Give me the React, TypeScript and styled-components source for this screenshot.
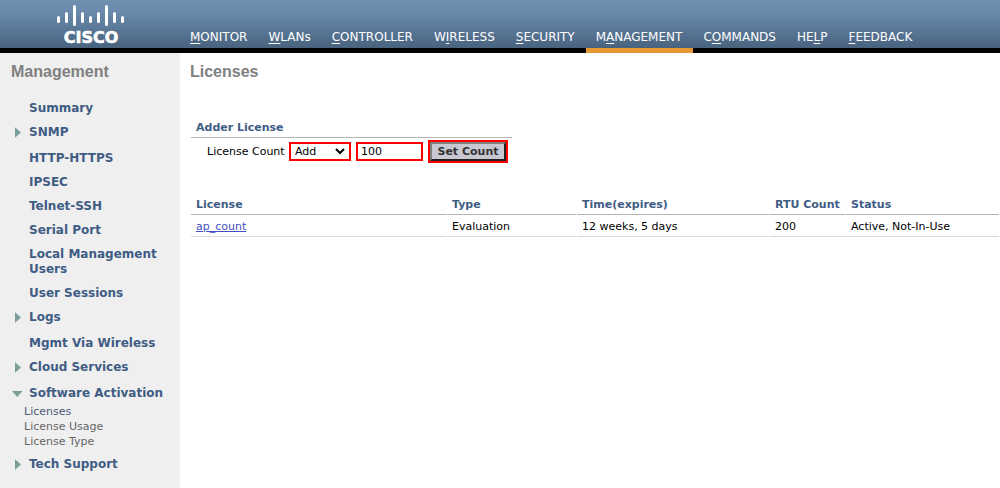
import React from "react";
import styled, { createGlobalStyle, css } from "styled-components";

const GlobalStyle = createGlobalStyle`
  *, *::before, *::after { box-sizing: border-box; }
  body {
    margin: 0;
    background: #fff;
    color: #000;
    font: 11px/15px Verdana, "DejaVu Sans", sans-serif;
  }
`;

const Page = styled.div`
  display: flex;
  flex-direction: column;
  min-height: 100vh;
`;

const Header = styled.header`
  display: flex;
  align-items: flex-end;
  background: #000 linear-gradient(#6f91b2 0, #6888a9 14px, #49637f 48px) no-repeat 0 0 / 100% 48px;
`;

const Brand = styled.a`
  flex: 0 0 180px;
  height: 53px;
  padding-left: 55px;
`;

const Logo = styled.svg`
  display: block;
  fill: #fff;
`;

const LogoText = styled.text`
  font: bold 16px "DejaVu Sans", sans-serif;
  stroke: #fff;
  stroke-width: 0.6;
`;

const Nav = styled.nav`
  display: flex;
`;

const NavLink = styled.a<{ $active?: boolean }>`
  padding: 0 11px 3px 10px;
  border-bottom: 5px solid ${(p) => (p.$active ? "#e69832" : "transparent")};
  color: #fff;
  font-size: 12px;
  line-height: 15px;
  text-decoration: none;
  white-space: nowrap;
`;

const Key = styled.span`
  text-decoration: underline;
  text-underline-offset: 2px;
`;

const Body = styled.div`
  display: flex;
  flex: 1;
`;

const Sidebar = styled.aside`
  flex: 0 0 180px;
  padding: 9px 11px;
  background: #efefef;
`;

const titleText = css`
  margin: 0;
  color: #808080;
  font: bold 16px/20px Arial, "Liberation Sans", sans-serif;
`;

const SidebarTitle = styled.h2`
  ${titleText}
`;

const Menu = styled.ul`
  margin: 19px 0 0;
  padding: 0;
  list-style: none;
`;

const MenuItem = styled.li<{ $group?: boolean }>`
  margin-bottom: ${(p) => (p.$group ? 11 : 9)}px;
`;

const MenuLink = styled.a`
  display: flex;
  color: #3f5c84;
  font-size: 12px;
  font-weight: bold;
  text-decoration: none;
`;

const Marker = styled.span`
  flex: 0 0 18px;
  height: 15px;
`;

const Arrow = styled.svg`
  display: block;
  fill: #7a9e9a;
`;

const SubMenu = styled.ul`
  margin: 3px 0 -3px;
  padding: 0 0 0 13px;
  list-style: none;
`;

const SubLink = styled.a<{ $current?: boolean }>`
  color: ${(p) => (p.$current ? "#4a5a78" : "#666")};
  text-decoration: none;
`;

const Main = styled.main`
  flex: 1;
  min-width: 0;
  padding: 9px 0 0 10px;
`;

const PageTitle = styled.h1`
  ${titleText}
`;

const Adder = styled.form`
  max-width: 321px;
  margin: 38px 0 0 1px;
`;

const SectionTitle = styled.h2`
  margin: 0;
  padding: 0 5px 2px;
  border-bottom: 1px solid #b4b4b4;
  color: #3f5c84;
  font-size: 11px;
  line-height: 15px;
`;

const FieldRow = styled.div`
  display: flex;
  align-items: center;
  gap: 5px;
  padding: 2px 0 0 16px;
`;

const FieldLabel = styled.label`
  width: 77px;
  white-space: nowrap;
`;

const control = css`
  height: 19px;
  border: 2px solid #f00;
  border-radius: 0;
  background: #fff;
  color: #000;
  font: inherit;
`;

const SelectWrap = styled.span`
  display: grid;
  width: 62px;
  align-items: center;
`;

const Select = styled.select`
  ${control}
  grid-area: 1 / 1;
  width: 100%;
  padding: 0 4px;
  line-height: 15px;
  appearance: none;
`;

const Chevron = styled.svg`
  grid-area: 1 / 1;
  justify-self: end;
  margin-right: 6px;
  pointer-events: none;
`;

const CountInput = styled.input`
  ${control}
  width: 67px;
  padding: 0 3px;
`;

const ButtonFrame = styled.span`
  display: flex;
  border: 2px solid #f00;
`;

const SetButton = styled.button`
  width: 76px;
  height: 19px;
  padding: 0;
  border: 2px solid;
  border-color: #808080 #222 #222 #808080;
  background: #c8c8d2;
  color: #333;
  font: bold 11px/15px Verdana, "DejaVu Sans", sans-serif;
  white-space: nowrap;
`;

const Table = styled.table`
  width: 100%;
  margin-top: 34px;
  border-collapse: separate;
  border-spacing: 1px 0;
  table-layout: fixed;
`;

const Col = styled.col<{ $width?: number }>`
  width: ${(p) => (p.$width ? `${p.$width}px` : "auto")};
`;

const Th = styled.th`
  padding: 0 0 2px 5px;
  border-bottom: 1px solid #b4b4b4;
  color: #3f5c84;
  text-align: left;
  white-space: nowrap;
`;

const Td = styled.td`
  padding: 4px 0 2px 5px;
  border-bottom: 1px solid #dadada;
  white-space: nowrap;
`;

const LicenseLink = styled.a`
  color: #4450c0;
`;

const navItems = [
  ["", "M", "ONITOR"],
  ["", "W", "LANs"],
  ["", "C", "ONTROLLER"],
  ["W", "I", "RELESS"],
  ["", "S", "ECURITY"],
  ["M", "A", "NAGEMENT"],
  ["C", "O", "MMANDS"],
  ["HE", "L", "P"],
  ["", "F", "EEDBACK"],
];

type Entry = { label: string; group?: boolean; children?: string[] };

const menu: Entry[] = [
  { label: "Summary" },
  { label: "SNMP", group: true },
  { label: "HTTP-HTTPS" },
  { label: "IPSEC" },
  { label: "Telnet-SSH" },
  { label: "Serial Port" },
  { label: "Local Management Users" },
  { label: "User Sessions" },
  { label: "Logs", group: true },
  { label: "Mgmt Via Wireless" },
  { label: "Cloud Services", group: true },
  { label: "Software Activation", group: true, children: ["Licenses", "License Usage", "License Type"] },
  { label: "Tech Support", group: true },
];

// Logo bars: left edge, top and height of each.
const bars = [
  [2, 16, 7],
  [10, 12, 11],
  [18, 5, 21],
  [26, 12, 11],
  [34, 16, 7],
  [42, 12, 11],
  [50, 5, 21],
  [58, 12, 11],
  [66, 16, 7],
];

export default function App() {
  return (
    <>
      <GlobalStyle />
      <Page>
        <Header>
          <Brand href="#" aria-label="Cisco home">
            <Logo width="72" height="48" viewBox="0 0 72 48">
              {bars.map(([x, y, h]) => (
                <rect key={x} x={x} y={y} width="3" height={h} rx="1.5" />
              ))}
              <LogoText x="36" y="43" textAnchor="middle">CISCO</LogoText>
            </Logo>
          </Brand>
          <Nav>
            {navItems.map(([before, key, after]) => (
              <NavLink href="#" key={before + key + after} $active={after === "NAGEMENT"}>
                {before}
                <Key>{key}</Key>
                {after}
              </NavLink>
            ))}
          </Nav>
        </Header>
        <Body>
          <Sidebar>
            <SidebarTitle>Management</SidebarTitle>
            <Menu>
              {menu.map(({ label, group, children }) => (
                <MenuItem key={label} $group={group}>
                  <MenuLink href="#">
                    <Marker>
                      {group && (
                        <Arrow width="14" height="15" viewBox="0 0 14 15">
                          <path d={children ? "M1 5h10.5L6.2 11z" : "M4 2.3l6 5.2-6 5.3z"} />
                        </Arrow>
                      )}
                    </Marker>
                    {label}
                  </MenuLink>
                  {children && (
                    <SubMenu>
                      {children.map((c) => (
                        <li key={c}>
                          <SubLink href="#" $current={c === "Licenses"}>{c}</SubLink>
                        </li>
                      ))}
                    </SubMenu>
                  )}
                </MenuItem>
              ))}
            </Menu>
          </Sidebar>
          <Main>
            <PageTitle>Licenses</PageTitle>
            <Adder onSubmit={(e) => e.preventDefault()}>
              <SectionTitle>Adder License</SectionTitle>
              <FieldRow>
                <FieldLabel htmlFor="count">License Count</FieldLabel>
                <SelectWrap>
                  <Select aria-label="Operation" defaultValue="Add">
                    <option>Add</option>
                    <option>Delete</option>
                  </Select>
                  <Chevron width="10" height="7" viewBox="0 0 10 7" aria-hidden="true">
                    <path d="M1 1l4 4 4-4" fill="none" stroke="#000" strokeWidth="2" />
                  </Chevron>
                </SelectWrap>
                <CountInput id="count" type="text" defaultValue="100" />
                <ButtonFrame>
                  <SetButton type="submit">Set Count</SetButton>
                </ButtonFrame>
              </FieldRow>
            </Adder>
            <Table>
              <colgroup>
                <Col $width={255} />
                <Col $width={129} />
                <Col $width={192} />
                <Col $width={75} />
                <Col />
              </colgroup>
              <thead>
                <tr>
                  <Th>License</Th>
                  <Th>Type</Th>
                  <Th>Time(expires)</Th>
                  <Th>RTU Count</Th>
                  <Th>Status</Th>
                </tr>
              </thead>
              <tbody>
                <tr>
                  <Td><LicenseLink href="#">ap_count</LicenseLink></Td>
                  <Td>Evaluation</Td>
                  <Td>12 weeks, 5 days</Td>
                  <Td>200</Td>
                  <Td>Active, Not-In-Use</Td>
                </tr>
              </tbody>
            </Table>
          </Main>
        </Body>
      </Page>
    </>
  );
}
